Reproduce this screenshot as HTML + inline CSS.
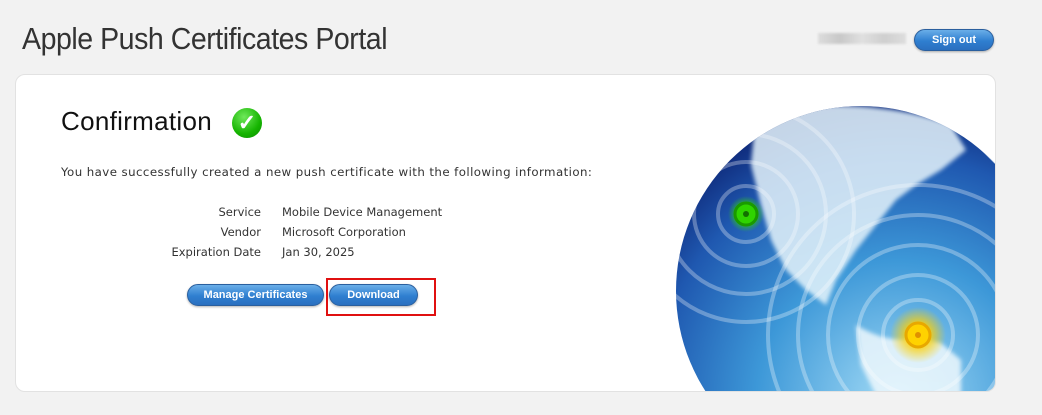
<!DOCTYPE html>
<html style="overflow:hidden"><head><style>
html,body{margin:0;width:1042px;height:415px;overflow:hidden}
body{background:#f2f2f2;font-family:"Liberation Sans",sans-serif;position:relative}
h1{position:absolute;left:22px;top:21px;margin:0;font-weight:normal;font-size:31px;color:#333;letter-spacing:-0.5px;transform:scaleX(0.92);transform-origin:left}
.blur{position:absolute;left:818px;top:33px;width:88px;height:11px;background:linear-gradient(90deg,#ddd,#c8c8c8,#e0e0e0,#cfcfcf,#ddd);filter:blur(1px)}
.btn{position:absolute;height:20px;border-radius:11px;background:linear-gradient(#6aaee8,#2f7fd0 55%,#2a6fbf);border:1px solid #2a5f9e;color:#fff;font-size:11px;font-weight:bold;text-align:center;line-height:20px;box-shadow:0 1px 2px rgba(0,0,0,.3)}
.card{position:absolute;left:15px;top:74px;width:979px;height:316px;background:#fff;border:1px solid #e2e2e2;border-radius:10px;overflow:hidden}
.t{position:absolute;font-family:"DejaVu Sans",sans-serif;font-size:11.5px;color:#333}
</style></head><body>
<h1>Apple Push Certificates Portal</h1>
<div class="blur"></div>
<div class="btn" style="left:914px;top:29px;width:78px">Sign out</div>
<div class="card">
<svg width="979" height="316" style="position:absolute;left:0;top:0">
<defs>
<radialGradient id="g" cx="0.6" cy="0.8" r="0.85">
<stop offset="0" stop-color="#a4dcf6"/><stop offset="0.45" stop-color="#3d98d8"/><stop offset="0.78" stop-color="#1f58b0"/><stop offset="1" stop-color="#0b1f6e"/></radialGradient>
<radialGradient id="y"><stop offset="0.3" stop-color="#ffd000"/><stop offset="1" stop-color="#ffd000" stop-opacity="0"/></radialGradient>
<radialGradient id="gr"><stop offset="0.3" stop-color="#33dd00"/><stop offset="1" stop-color="#33dd00" stop-opacity="0"/></radialGradient>
<filter id="b"><feGaussianBlur stdDeviation="2"/></filter>
<clipPath id="c"><circle cx="845" cy="216" r="185"/></clipPath>
</defs>
<circle cx="845" cy="216" r="185" fill="url(#g)"/>
<g clip-path="url(#c)">
<path d="M740 38 C790 25 880 28 935 50 L950 75 925 95 900 110 880 125 860 150 840 175 820 205 810 230 790 215 770 195 755 165 745 130 735 90Z" fill="#e6f4fb" opacity="0.85" filter="url(#b)"/>
<path d="M840 250 C860 262 880 268 900 262 L925 268 945 285 945 320 860 320 845 290Z" fill="#eef8fd" opacity="0.85" filter="url(#b)"/>
<path d="M950 40 L980 60 980 90 960 70Z" fill="#e6f4fb" opacity="0.8"/>
<g fill="none" stroke="#fff" stroke-opacity="0.3" stroke-width="4">
<circle cx="730" cy="139" r="28"/><circle cx="730" cy="139" r="52"/><circle cx="730" cy="139" r="80"/><circle cx="730" cy="139" r="108"/>
<circle cx="902" cy="260" r="35"/><circle cx="902" cy="260" r="60"/><circle cx="902" cy="260" r="90"/><circle cx="902" cy="260" r="120"/><circle cx="902" cy="260" r="150"/>
</g>
</g>
<circle cx="730" cy="139" r="18" fill="url(#gr)"/>
<circle cx="730" cy="139" r="11" fill="#2fd400" stroke="#1a9a00" stroke-width="3"/>
<circle cx="730" cy="139" r="3" fill="#127000"/>
<circle cx="902" cy="260" r="28" fill="url(#y)"/>
<circle cx="902" cy="260" r="12" fill="#ffd200" stroke="#e8a800" stroke-width="3"/>
<circle cx="902" cy="260" r="3" fill="#e09000"/>
</svg>
<div style="position:absolute;left:45px;top:31px;font-size:26px;color:#111;letter-spacing:0.3px">Confirmation</div>
<div style="position:absolute;left:216px;top:33px;width:30px;height:30px;border-radius:50%;background:radial-gradient(circle at 40% 30%,#6fe85a,#15b400 60%,#0a8a00);color:#fff;font-size:22px;line-height:30px;text-align:center;font-weight:bold">✓</div>
<div class="t" style="left:45px;top:90px;font-size:11.8px;letter-spacing:0.42px">You have successfully created a new push certificate with the following information:</div>
<div class="t" style="left:130px;top:127px;width:115px;text-align:right;line-height:20px">Service<br>Vendor<br>Expiration Date</div>
<div class="t" style="left:266px;top:127px;line-height:20px">Mobile Device Management<br>Microsoft Corporation<br>Jan 30, 2025</div>
<div class="btn" style="left:171px;top:209px;width:135px">Manage Certificates</div>
<div class="btn" style="left:313px;top:209px;width:87px">Download</div>
<div style="position:absolute;left:310px;top:203px;width:106px;height:34px;border:2px solid #e01010"></div>
</div>
</body></html>
